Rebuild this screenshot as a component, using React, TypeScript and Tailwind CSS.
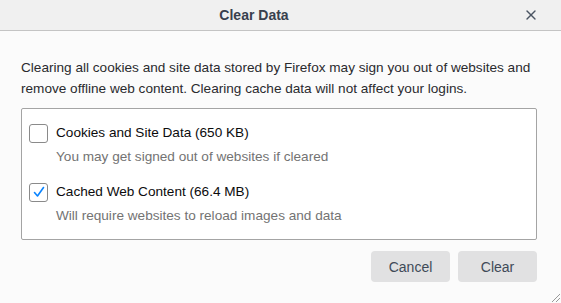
import { X } from "lucide-react";

const Checkbox = ({ checked }: { checked: boolean }) => (
  <div className="w-[19px] h-[19px] shrink-0 rounded-[3px] border border-[#8a8a8a] bg-white flex items-center justify-center">
    {checked && (
      <svg width="14" height="14" viewBox="0 0 14 14" fill="none">
        <path d="M2.5 7.5 L5.5 11 L11.5 2.5" stroke="#0a84ff" strokeWidth="1.6" strokeLinecap="round" strokeLinejoin="round" />
      </svg>
    )}
  </div>
);

const Option = ({ label, hint, checked }: { label: string; hint: string; checked: boolean }) => (
  <div>
    <div className="flex items-center gap-[8px] h-[20px]">
      <Checkbox checked={checked} />
      <span className="text-[#0c0c0d]">{label}</span>
    </div>
    <div className="pl-[27px] mt-[4px] leading-[20px] text-[#737373]">{hint}</div>
  </div>
);

export default function App() {
  return (
    <div
      className="w-[561px] h-[303px] bg-[#fbfbfb] text-[13.6px] leading-[20px] relative overflow-hidden"
      style={{ fontFamily: '"Liberation Sans", Arial, sans-serif' }}
    >
      <div className="h-[31px] bg-[#f0f0f0] border-b border-[#c4c4c4] flex items-center">
        <div className="flex-1 flex justify-center pr-[53px]">
          <span className="font-bold text-[14px] text-[#38404d]">Clear Data</span>
        </div>
        <button className="absolute right-[22px] top-[7px] text-[#4a5462]">
          <X size={16} strokeWidth={2} />
        </button>
      </div>

      <div className="px-[21px] pt-[26px]">
        <p className="text-[#2a2a2e] leading-[21px]">
          Clearing all cookies and site data stored by Firefox may sign you out of websites and
          remove offline web content. Clearing cache data will not affect your logins.
        </p>

        <div className="mt-[9px] mr-[3px] h-[132px] bg-white border border-[#a4a4a4] rounded-[2px] pl-[7px] pt-[14px] flex flex-col gap-[15px]">
          <Option label="Cookies and Site Data (650 KB)" hint="You may get signed out of websites if cleared" checked={false} />
          <Option label="Cached Web Content (66.4 MB)" hint="Will require websites to reload images and data" checked />
        </div>

        <div className="flex justify-end gap-[8px] mt-[11px] mr-[3px]">
          <button className="w-[79px] h-[31px] rounded-[4px] bg-[#e1e1e2] text-[#404a58] text-[14px]">Cancel</button>
          <button className="w-[79px] h-[31px] rounded-[4px] bg-[#e1e1e2] text-[#404a58] text-[14px]">Clear</button>
        </div>
      </div>

      <svg className="absolute right-0 bottom-0" width="12" height="12" viewBox="0 0 12 12">
        <path d="M11 3 L3 11 M11 7 L7 11" stroke="#9a9a9a" strokeWidth="1" />
      </svg>
    </div>
  );
}
